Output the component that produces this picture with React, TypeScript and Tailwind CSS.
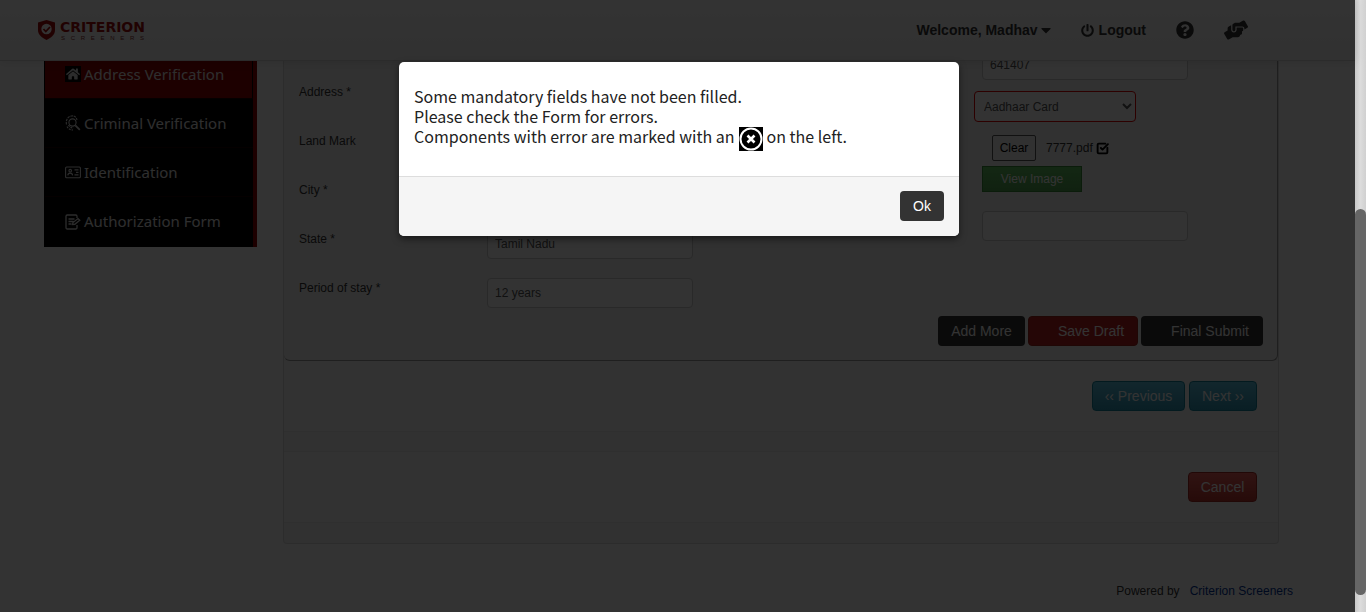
import React from "react";
import { FaPowerOff, FaQuestionCircle, FaHandsHelping, FaCaretDown, FaHome } from "react-icons/fa";
import { SquareCheckBig } from "lucide-react";

const inputClass =
  "block h-[30px] w-[206px] rounded border border-[#ccc] bg-white px-[7px] text-xs text-[#555]";

function SearchPrintIcon() {
  return (
    <svg viewBox="0 0 16 16" className="h-4 w-4 shrink-0" fill="none" stroke="#ddd" strokeWidth="1.1" aria-hidden="true">
      <circle cx="7.500" cy="7.500" r="3.600" />
      <path d="M1.500 9.500C.500 5 3 1.500 6.500 1s5 1.500 5.500 4" strokeDasharray="2.500 .800" />
      <path d="M2 11.500c1 2 3 3.500 6 3.500M3.500 10c1 2 2.500 3 5 3" strokeDasharray="2 1" />
      <path d="M10.300 10.300l4.500 4.500" strokeWidth="1.800" />
    </svg>
  );
}

function CardIcon() {
  return (
    <svg viewBox="0 0 16 16" className="h-4 w-4 shrink-0" fill="none" stroke="#ddd" strokeWidth="1.100" aria-hidden="true">
      <rect x="0.600" y="3" width="14.800" height="10.800" rx="1" />
      <circle cx="5.200" cy="6.700" r="1.300" />
      <path d="M2.800 11.400c.2-3 4.600-3 4.800 0M9.500 5.900h4M11 8.400h2.500M9.500 10.900h4" />
    </svg>
  );
}

function FormIcon() {
  return (
    <svg viewBox="0 0 16 16" className="h-4 w-4 shrink-0" fill="none" stroke="#ddd" strokeWidth="1.300" aria-hidden="true">
      <path d="M12 4V2.200a1.200 1.200 0 0 0-1.200-1.200H2.200A1.200 1.200 0 0 0 1 2.200v11.600A1.200 1.200 0 0 0 2.200 15h8.600a1.200 1.200 0 0 0 1.200-1.200V11" />
      <path d="M3.500 5h6M3.500 7.500h5M3.500 10h3M7.500 10.500l.5-2 5-4 1.800 1.800-5 4z" />
    </svg>
  );
}

function HomeIcon() {
  return (
    <span className="flex h-4 w-4 shrink-0 items-center justify-center bg-black">
      <FaHome className="h-[14px] w-[14px] text-[#ddd]" />
    </span>
  );
}

const navItems = [
  { label: "Address Verification", icon: <HomeIcon />, active: true },
  { label: "Criminal Verification", icon: <SearchPrintIcon />, active: false },
  { label: "Identification", icon: <CardIcon />, active: false },
  { label: "Authorization Form", icon: <FormIcon />, active: false },
];

const fields = [
  { id: "address", label: "Address *", value: "" },
  { id: "landmark", label: "Land Mark", value: "" },
  { id: "city", label: "City *", value: "" },
  { id: "state", label: "State *", value: "Tamil Nadu" },
  { id: "period", label: "Period of stay *", value: "12 years" },
];

function Header() {
  return (
    <header className="z-10 flex h-[61px] shrink-0 items-center justify-between border-b border-[#d4d4d4] bg-gradient-to-b from-white to-[#f2f2f2] pl-[37px] pr-[107px] shadow-[0_1px_10px_rgba(0,0,0,0.1)]">
      <a href="#home" className="flex items-center gap-1" aria-label="Criterion Screeners">
        <svg viewBox="0 0 18 20" className="h-5 w-[19px]" aria-hidden="true">
          <path d="M9 0l8.500 2.500v7.500c0 4.500-3.500 7.700-8.500 10C4 17.700.500 14.500.500 10V2.500z" fill="#a30d0d" />
          <circle cx="9" cy="9" r="5.200" fill="#fff" />
          <path d="M6 9l2.300 2.500L12.500 7" fill="none" stroke="#a30d0d" strokeWidth="1.800" />
        </svg>
        <span className="flex flex-col gap-px pt-[2px]">
          <span className="font-['DejaVu_Sans',sans-serif] text-sm leading-[13px] font-bold text-[#a30d0d]">CRITERION</span>
          <span className="flex justify-between px-px text-[6px] leading-[7px] text-[#8a3030]">
            {"SCREENERS".split("").map((c, i) => (
              <span key={i}>{c}</span>
            ))}
          </span>
        </span>
      </a>
      <nav className="flex items-center text-sm font-bold text-[#333]">
        <button type="button" className="mr-[30px] flex items-center gap-[3px]">
          Welcome, Madhav <FaCaretDown className="h-4 w-[10px]" />
        </button>
        <a href="#logout" className="mr-[30px] flex items-center gap-[5px]">
          <FaPowerOff className="h-[13px] w-[13px]" /> Logout
        </a>
        <a href="#help" aria-label="Help" className="mr-[30px]">
          <FaQuestionCircle className="h-[18px] w-[18px]" />
        </a>
        <a href="#support" aria-label="Support">
          <FaHandsHelping className="h-[22px] w-6" />
        </a>
      </nav>
    </header>
  );
}

function Sidebar() {
  return (
    <aside className="-mt-[11px] w-[213px] shrink-0 self-start border-l border-r-4 border-l-black border-r-[#8f0000] bg-black pb-px">
      <ul className="divide-y divide-[#1c0000]">
        {navItems.map((item) => (
          <li key={item.label} className="h-[49px]">
            <a
              href="#section"
              className={`mr-px flex h-full items-center gap-[3px] pl-5 font-['Noto_Sans',sans-serif] text-[15px] whitespace-nowrap text-[#e6e6e6] ${
                item.active ? "bg-[#8f0000]" : "bg-black"
              }`}
            >
              {item.icon}
              {item.label}
            </a>
          </li>
        ))}
      </ul>
    </aside>
  );
}

function FormPanel() {
  return (
    <section className="w-[996px] shrink-0 rounded-b border border-t-0 border-[#dcdcdc] bg-[#f3f3f3] pb-5">
      <form className="rounded-b-md border-r border-b border-[#999] pr-[14px] pb-[14px] pl-[15px]">
        <div className="flex">
          <div className="grow pt-[21px]">
            {fields.map((f) => (
              <div key={f.id} className="flex h-[49px]">
                <label htmlFor={f.id} className="w-[188px] shrink-0 text-xs leading-5 text-[#333]">
                  {f.label}
                </label>
                <input id={f.id} className={inputClass} defaultValue={f.value} />
              </div>
            ))}
          </div>
          <div className="-mt-[11px] w-[289px] shrink-0">
            <input aria-label="Pin Code" className={`${inputClass} ml-2`} defaultValue="641407" />
            <select
              aria-label="Address proof"
              defaultValue="Aadhaar Card"
              className="mt-[11px] block h-[31px] w-[162px] rounded border border-[#e00000] bg-white px-[5px] text-xs text-[#555]"
            >
              <option>Aadhaar Card</option>
            </select>
            <div className="mt-[13px] ml-[18px] flex h-[26px] items-center text-xs">
              <button type="button" className="h-[26px] w-11 rounded-xs border border-[#555] text-black">
                Clear
              </button>
              <span className="ml-[10px] text-[#333]">7777.pdf</span>
              <SquareCheckBig className="ml-[3px] h-[13px] w-[13px] text-black" strokeWidth={3.5} />
            </div>
            <button
              type="button"
              className="mt-[5px] ml-2 block h-[26px] w-[100px] border border-[#3b8a3b] bg-gradient-to-b from-[#62c462] to-[#51a351] text-xs text-white"
            >
              View Image
            </button>
            <input aria-label="Document number" className={`${inputClass} mt-[19px] ml-2`} />
          </div>
        </div>
        <div className="-mt-[11px] flex justify-end gap-[3px] text-sm text-white">
          <button type="button" className="h-[30px] w-[87px] rounded bg-[#333]">Add More</button>
          <button type="button" className="h-[30px] w-[110px] rounded border border-[#9d261d] bg-[#b92020] pl-4">Save Draft</button>
          <button type="button" className="h-[30px] w-[122px] rounded bg-[#333] pl-4">Final Submit</button>
        </div>
      </form>
      <div className="flex justify-end gap-1 border-b border-[#e9e9e9] bg-[#f7f7f7] py-5 pr-[21px] text-sm text-white">
        <button type="button" className="h-[30px] w-[93px] rounded border border-[#13839c] bg-gradient-to-b from-[#5bc0de] to-[#2f96b4]">
          ‹‹ Previous
        </button>
        <button type="button" className="h-[30px] w-[68px] rounded border border-[#13839c] bg-gradient-to-b from-[#5bc0de] to-[#2f96b4]">
          Next ››
        </button>
      </div>
      <div className="mt-[19px] flex justify-end border-y border-[#e9e9e9] bg-[#f9f9f9] py-5 pr-[21px] text-sm text-white">
        <button type="button" className="h-[30px] w-[69px] rounded border border-[#a52a24] bg-gradient-to-b from-[#ee5f5b] to-[#bd362f]">
          Cancel
        </button>
      </div>
    </section>
  );
}

function ErrorDialog() {
  return (
    <div className="absolute inset-0 z-20 flex items-start justify-center bg-black/80 pt-[62px] pl-[3px]">
      <div role="dialog" aria-modal="true" className="w-[560px] overflow-hidden rounded-[5px] bg-white shadow-[0_3px_7px_rgba(0,0,0,0.5)]">
        <div className="h-[114px] px-[15px] pt-6 font-['Noto_Sans_CJK_SC',sans-serif] text-base leading-5 font-normal text-[#222]">
          <p>
            Some mandatory fields have not been filled.
            <br />
            Please check the Form for errors.
          </p>
          <p className="flex gap-1">
            Components with error are marked with an
            <svg viewBox="0 0 24 24" className="mt-px h-6 w-6" role="img" aria-label="error mark">
              <rect width="24" height="24" fill="#000" />
              <circle cx="12" cy="12" r="10.500" fill="none" stroke="#fff" strokeWidth="2" />
              <path d="M8.500 8.500l7 7M15.500 8.500l-7 7" stroke="#fff" strokeWidth="2.600" />
            </svg>
            on the left.
          </p>
        </div>
        <div className="flex justify-end border-t border-[#ddd] bg-[#f5f5f5] px-[15px] pt-[14px] pb-[15px]">
          <button type="button" className="h-[30px] w-11 rounded bg-[#333] text-sm text-white">Ok</button>
        </div>
      </div>
    </div>
  );
}

export default function App() {
  return (
    <div className="flex min-h-screen bg-white font-['Liberation_Sans',Arial,sans-serif]">
      <div className="relative flex min-w-0 grow flex-col">
        <Header />
        <main className="flex gap-[26px] overflow-hidden pl-11">
          <Sidebar />
          <FormPanel />
        </main>
        <footer className="flex justify-end gap-[10px] pt-[37px] pr-[62px] text-xs leading-5 text-[#333]">
          <span>Powered by</span>
          <a href="#criterion" className="text-[#003399]">Criterion Screeners</a>
        </footer>
        <ErrorDialog />
      </div>
      <div className="w-[11px] shrink-0 bg-gradient-to-r from-[#c8c8c8] via-[#dcdcdc] to-[#d0d0d0] pt-[209px]">
        <div className="h-[386px] rounded-full bg-[#666]" />
      </div>
    </div>
  );
}
